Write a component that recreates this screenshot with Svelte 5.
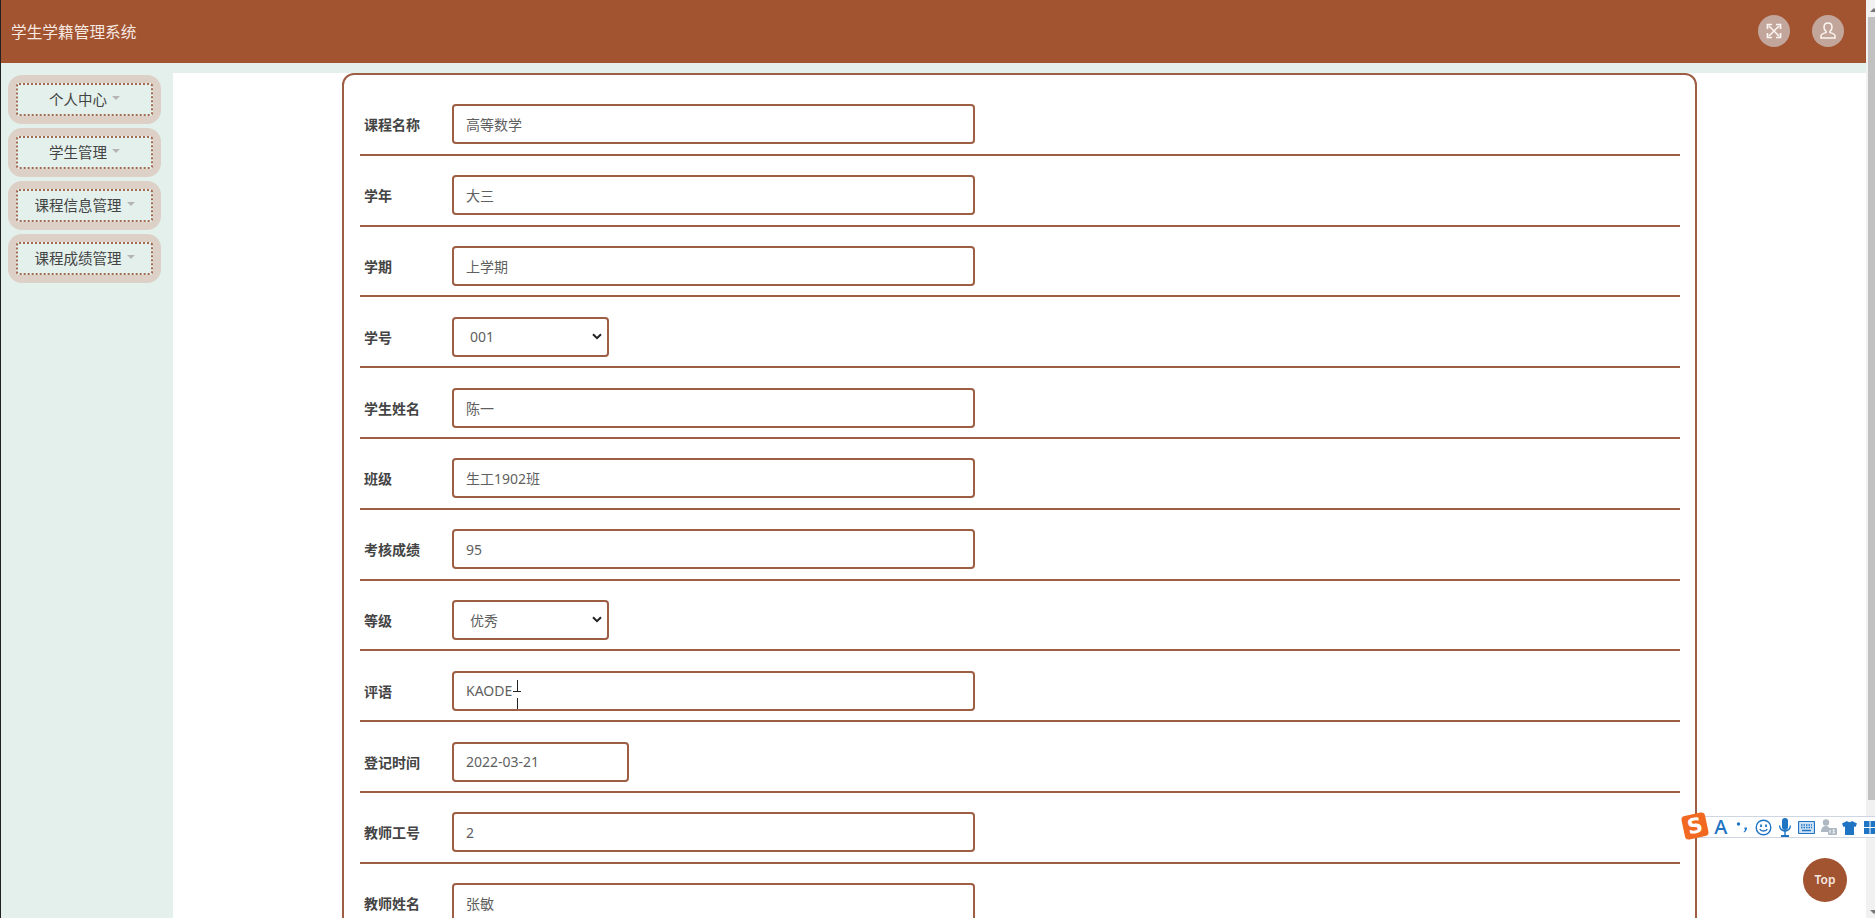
<script>
    const menus = ['个人中心', '学生管理', '课程信息管理', '课程成绩管理']
    const fields = [
        { label: '课程名称', value: '高等数学' },
        { label: '学年', value: '大三' },
        { label: '学期', value: '上学期' },
        { label: '学号', value: '001', type: 'select' },
        { label: '学生姓名', value: '陈一' },
        { label: '班级', value: '生工1902班' },
        { label: '考核成绩', value: '95' },
        { label: '等级', value: '优秀', type: 'select' },
        { label: '评语', value: 'KAODE', caret: true },
        { label: '登记时间', value: '2022-03-21', type: 'date' },
        { label: '教师工号', value: '2' },
        { label: '教师姓名', value: '张敏' },
    ]
</script>

<div class="page">
    <header class="topbar">
        <span class="title">学生学籍管理系统</span>
        <div class="actions">
            <span class="round">
                <svg width="18" height="18" viewBox="0 0 18 18" fill="none" stroke="#fdf6f2" stroke-width="1.500">
                    <path d="M4 4l10 10M14 4L4 14" />
                    <path d="M2.500 7V2.500H7M11 2.500h4.500V7M15.500 11v4.500H11M7 15.500H2.500V11" stroke-width="1.700" />
                </svg>
            </span>
            <span class="round">
                <svg width="20" height="20" viewBox="0 0 20 20" fill="none" stroke="#fdf6f2" stroke-width="1.500">
                    <path d="M10 2c2.600 0 4 1.800 4 4.200 0 1.900-.9 3.300-2 4.200v1.200c2.600.7 5 1.500 5 3.200V17H3v-2.200c0-1.700 2.400-2.500 5-3.200v-1.200c-1.100-.9-2-2.300-2-4.200C6 3.800 7.400 2 10 2z" />
                </svg>
            </span>
        </div>
    </header>

    <div class="body">
        <nav class="sidebar">
            {#each menus as m}
                <div class="menu">
                    <div class="menu-inner">{m}<i class="caret"></i></div>
                </div>
            {/each}
        </nav>

        <main class="main">
            <form class="card">
                {#each fields as f}
                    <div class="row">
                        <label class="label">{f.label}</label>
                        <div class="control" class:sel={f.type === 'select'} class:date={f.type === 'date'}>
                            <span>{f.value}</span>
                            {#if f.caret}<i class="ibeam"></i>{/if}
                            {#if f.type === 'select'}
                                <svg class="chev" width="10" height="7" viewBox="0 0 10 7" fill="none" stroke="#222" stroke-width="2">
                                    <path d="M1 1.200L5 5.200l4-4" />
                                </svg>
                            {/if}
                        </div>
                    </div>
                {/each}
            </form>
        </main>

        <div class="scrollbar">
            <span class="arrow up"></span>
            <div class="thumb"></div>
            <span class="arrow down"></span>
        </div>
    </div>

    <div class="ime">
        <span class="ime-logo">S</span>
        <span class="slot ime-a">A</span>
        <span class="slot ime-punc">
            <svg width="12" height="12" viewBox="0 0 12 12" fill="#1f74c4">
                <circle cx="2.500" cy="3" r="1.700" />
                <path d="M8.500 6.500h2.500c0 2.500-1 4-3 5l-.5-.8c1-.6 1.500-1.300 1.500-2.200H8.500z" />
            </svg>
        </span>
        <span class="slot">
            <svg width="17" height="17" viewBox="0 0 17 17" fill="none" stroke="#1f74c4" stroke-width="1.400">
                <circle cx="8.500" cy="8.500" r="7.300" />
                <path d="M4.800 10c1 2.600 6.400 2.600 7.400 0" />
                <path d="M6 5.500v2.500M11 5.500v2.500" stroke-width="1.800" />
            </svg>
        </span>
        <span class="slot">
            <svg width="14" height="19" viewBox="0 0 14 19" fill="#1f74c4">
                <rect x="4" y="0" width="6" height="12" rx="3" />
                <path d="M1 7.500h1.300c0 6 9.400 6 9.400 0H13c0 4-2.500 5.800-5.300 6.200V17H11v2H3v-2h3.300v-3.300C3.500 13.300 1 11.500 1 7.500z" />
            </svg>
        </span>
        <span class="slot">
            <svg width="17" height="13" viewBox="0 0 17 13" fill="#cfe2f5" stroke="#1f74c4">
                <rect x="0.500" y="0.500" width="16" height="12" rx="1" stroke-width="1.200" />
                <path d="M3 4h11M3 6.500h11" fill="none" stroke-dasharray="1.500 1" stroke-width="1.500" />
                <path d="M4 9.500h9" fill="none" stroke-width="1.500" />
            </svg>
        </span>
        <span class="slot">
            <svg width="17" height="16" viewBox="0 0 17 16" fill="#aeb8c2">
                <circle cx="6" cy="3.500" r="3.200" />
                <path d="M1 13c0-4 2-6 5-6 2 0 3 .8 3 2v4z" />
                <rect x="8" y="9" width="9" height="7" rx="1" />
                <path d="M10 11v3M12.500 11h2l-1 1.500 1 1.500h-2" fill="none" stroke="#fff" />
            </svg>
        </span>
        <span class="slot">
            <svg width="15" height="15" viewBox="0 0 15 15" fill="#1f74c4">
                <path d="M5 1c1 1.500 4 1.500 5 0l5 2.500-1.500 3.500-1.500-.6V15H3V6.400L1.500 7 0 3.500z" />
            </svg>
        </span>
        <span class="slot grid">
            <svg width="12" height="13" viewBox="0 0 12 13" fill="#1f74c4">
                <rect x="0" y="0" width="5.500" height="6" />
                <rect x="6.500" y="0" width="5.500" height="6" />
                <rect x="0" y="7" width="5.500" height="6" />
                <rect x="6.500" y="7" width="5.500" height="6" />
            </svg>
        </span>
    </div>

    <div class="top-btn">Top</div>
</div>

<style>
    :global(body) {
        margin: 0;
        overflow: hidden;
    }

    .page {
        width: 1875px;
        height: 918px;
        overflow: hidden;
        position: relative;
        border-left: 1px solid #222;
        box-sizing: border-box;
        background: #e3f0ec;
        font-family: "Noto Sans", "Noto Sans CJK SC", sans-serif;
    }

    .topbar {
        height: 63px;
        box-sizing: border-box;
        margin-right: 9px;
        background: #a25330;
        display: flex;
        align-items: center;
        justify-content: space-between;
        padding: 0 22px 1px 10px;
    }

    .title {
        color: #f6e9e2;
        font-size: 15.700px;
    }

    .actions {
        display: flex;
        gap: 22px;
    }

    .round {
        width: 32px;
        height: 32px;
        border-radius: 50%;
        background: #c2a69b;
        display: flex;
        align-items: center;
        justify-content: center;
    }

    .body {
        display: flex;
        height: 855px;
    }

    .sidebar {
        width: 172px;
        flex: none;
        box-sizing: border-box;
        padding: 12px 0 0 7px;
        display: flex;
        flex-direction: column;
        gap: 4px;
    }

    .menu {
        width: 153px;
        height: 49px;
        box-sizing: border-box;
        padding: 8px;
        background: #dcd0c7;
        border-radius: 14px;
    }

    .menu-inner {
        height: 33px;
        box-sizing: border-box;
        border: 2px dotted #a56a50;
        border-radius: 3px;
        background: #e3f0ec;
        color: #444;
        font-size: 14.500px;
        line-height: 1;
        padding-bottom: 1px;
        display: flex;
        align-items: center;
        justify-content: center;
    }

    .caret {
        width: 0;
        height: 0;
        margin: 0 0 3px 5px;
        border-left: 4px solid transparent;
        border-right: 4px solid transparent;
        border-top: 4px solid #b5b5b5;
    }

    .main {
        flex: 1;
        margin-top: 10px;
        background: #fff;
        min-width: 0;
        padding: 0 0 0 169px;
        box-sizing: border-box;
    }

    .card {
        width: 1355px;
        box-sizing: border-box;
        border: 2px solid #9d5e43;
        border-radius: 12px;
        padding: 10px 15px 0 16px;
        height: 1000px;
        display: flex;
        flex-direction: column;
    }

    .row {
        height: 70.800px;
        flex: none;
        box-sizing: border-box;
        border-bottom: 2px solid #9d5e43;
        display: flex;
        align-items: center;
        padding: 10px 0 0 4px;
    }

    .label {
        width: 88px;
        flex: none;
        color: #444;
        font-size: 14px;
        font-weight: 600;
    }

    .control {
        width: 523px;
        height: 40px;
        box-sizing: border-box;
        border: 2px solid #9d5e43;
        border-radius: 4px;
        padding: 0 12px;
        color: #5f5f5f;
        font-size: 14px;
        display: flex;
        align-items: center;
        position: relative;
    }

    .control.sel {
        width: 157px;
        padding-left: 16px;
        justify-content: space-between;
        padding-right: 5px;
    }

    .control.date {
        width: 177px;
    }

    .ibeam {
        position: absolute;
        left: 63px;
        top: 7px;
        width: 1px;
        height: 29px;
        background: #222;
    }

    .ibeam::before {
        content: "";
        position: absolute;
        left: -4px;
        top: 11px;
        width: 8px;
        height: 1px;
        background: #222;
    }

    .ibeam::after {
        content: "";
        position: absolute;
        left: 0;
        top: 12px;
        width: 1px;
        height: 6px;
        background: #fff;
    }

    .scrollbar {
        width: 9px;
        flex: none;
        margin-top: -63px;
        background: #f1f1f1;
        display: flex;
        flex-direction: column;
        height: 918px;
        overflow: hidden;
    }

    .thumb {
        height: 783px;
        margin: 5px 0 auto 2px;
        background: #c1c1c1;
    }

    .arrow {
        flex: none;
        width: 0;
        height: 0;
        border-left: 4px solid transparent;
        border-right: 4px solid transparent;
        margin-left: 4px;
    }

    .arrow.up {
        border-bottom: 4px solid #777;
        margin-top: 8px;
    }

    .arrow.down {
        border-top: 4px solid #777;
        margin-bottom: 4px;
    }

    .ime {
        position: absolute;
        left: 1695px;
        top: 816px;
        width: 179px;
        height: 22px;
        box-sizing: border-box;
        background: #fff;
        border-top: 1px solid #cfd6e2;
        border-bottom: 1px solid #cfd6e2;
        display: flex;
        align-items: center;
        padding-left: 14px;
    }

    .ime-logo {
        position: absolute;
        left: -13px;
        top: -3px;
        width: 24px;
        height: 24px;
        border-radius: 4px;
        background: #f26a21;
        color: #fff;
        font-family: "DejaVu Sans", sans-serif;
        font-size: 21px;
        font-weight: 700;
        line-height: 24px;
        text-align: center;
        transform: rotate(-12deg);
    }

    .slot {
        width: 21.500px;
        height: 20px;
        flex: none;
        display: flex;
        align-items: center;
        justify-content: center;
    }

    .slot.grid {
        justify-content: flex-start;
        margin-left: 3px;
    }

    .ime-a {
        color: #1f74c4;
        font-size: 20px;
        font-weight: 500;
        line-height: 1;
    }

    .top-btn {
        position: absolute;
        left: 1802px;
        top: 858px;
        width: 44px;
        height: 44px;
        border-radius: 50%;
        background: #a25330;
        color: #f6e9e2;
        font-size: 12px;
        font-weight: 600;
        text-align: center;
        line-height: 44px;
    }
</style>
